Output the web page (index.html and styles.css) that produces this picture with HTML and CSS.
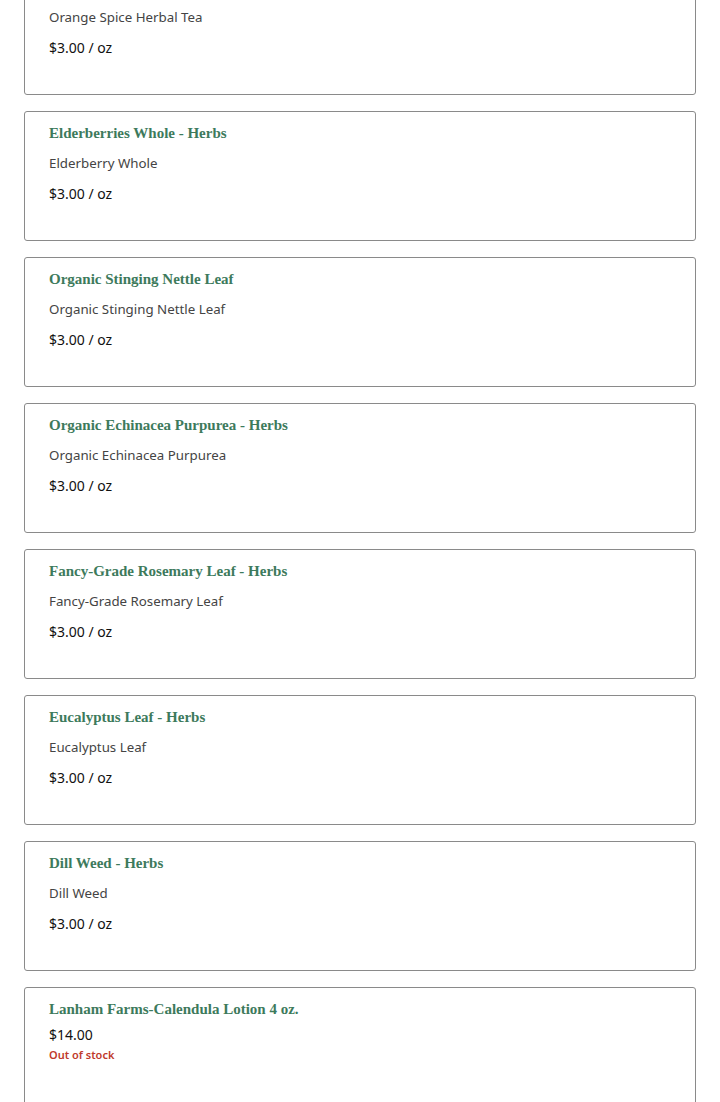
FILE: index.html
```html
<!DOCTYPE html>
<html>
<head>
<meta charset="utf-8">
<link rel="stylesheet" href="styles.css">
</head>
<body>
<div class="list">
  <div class="card first">
    <div class="desc">Orange Spice Herbal Tea</div>
    <div class="price">$3.00 / oz</div>
  </div>
  <div class="card">
    <div class="title">Elderberries Whole - Herbs</div>
    <div class="desc">Elderberry Whole</div>
    <div class="price">$3.00 / oz</div>
  </div>
  <div class="card">
    <div class="title">Organic Stinging Nettle Leaf</div>
    <div class="desc">Organic Stinging Nettle Leaf</div>
    <div class="price">$3.00 / oz</div>
  </div>
  <div class="card">
    <div class="title">Organic Echinacea Purpurea - Herbs</div>
    <div class="desc">Organic Echinacea Purpurea</div>
    <div class="price">$3.00 / oz</div>
  </div>
  <div class="card">
    <div class="title">Fancy-Grade Rosemary Leaf - Herbs</div>
    <div class="desc">Fancy-Grade Rosemary Leaf</div>
    <div class="price">$3.00 / oz</div>
  </div>
  <div class="card">
    <div class="title">Eucalyptus Leaf - Herbs</div>
    <div class="desc">Eucalyptus Leaf</div>
    <div class="price">$3.00 / oz</div>
  </div>
  <div class="card">
    <div class="title">Dill Weed - Herbs</div>
    <div class="desc">Dill Weed</div>
    <div class="price">$3.00 / oz</div>
  </div>
  <div class="card">
    <div class="title">Lanham Farms-Calendula Lotion 4 oz.</div>
    <div class="price tight">$14.00</div>
    <div class="stock">Out of stock</div>
  </div>
</div>
</body>
</html>
```
FILE: styles.css
```css
html, body {
  margin: 0;
  padding: 0;
  background: #ffffff;
}
body {
  font-family: "Liberation Sans", Arial, sans-serif;
  overflow: hidden;
}
.list {
  display: flex;
  flex-direction: column;
  gap: 16px;
  padding: 0 24px;
  margin-top: -35px;
}
.card {
  box-sizing: border-box;
  height: 130px;
  border: 1px solid #8a8a8a;
  border-radius: 3px;
  padding: 11px 24px 0 24px;
  display: flex;
  flex-direction: column;
}
.card:last-child {
  height: 140px;
}
.title {
  font-family: "Liberation Serif", "Times New Roman", serif;
  font-weight: bold;
  font-size: 15px;
  line-height: 20px;
  color: #3d7a5c;
}
.desc {
  font-family: "Noto Sans", sans-serif;
  font-size: 13.3px;
  line-height: 20px;
  color: #444444;
  margin-top: 10px;
}
.card.first .desc {
  margin-top: 30px;
}
.price {
  font-family: "Noto Sans", sans-serif;
  font-size: 14px;
  line-height: 20px;
  color: #111111;
  margin-top: 11px;
}
.price.tight {
  margin-top: 6px;
}
.stock {
  font-family: "Noto Sans", sans-serif;
  font-size: 11px;
  font-weight: 600;
  line-height: 20px;
  color: #c0392b;
}
```
